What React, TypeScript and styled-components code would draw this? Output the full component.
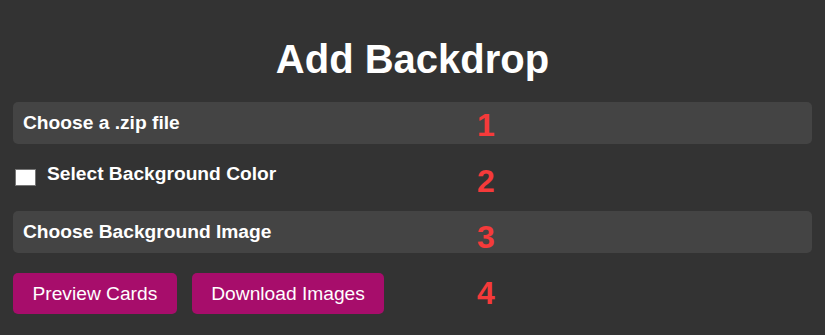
import styled, { createGlobalStyle } from "styled-components";

const GlobalStyle = createGlobalStyle`
  html, body {
    margin: 0;
    padding: 0;
    background-color: #333333;
    font-family: "Liberation Sans", Arial, sans-serif;
  }
`;

const steps = [
  { id: 1, dy: 2 },
  { id: 2, dy: 3 },
  { id: 3, dy: 5 },
  { id: 4, dy: -1 },
];

const App = () => {
  return (
    <>
      <GlobalStyle />
      <Page>
        <Title>Add Backdrop</Title>
        <Form>
          <FieldRow>
            <FieldLabel>Choose a .zip file</FieldLabel>
            <Marker $dy={steps[0].dy}>{steps[0].id}</Marker>
          </FieldRow>
          <PlainRow>
            <Swatch />
            <FieldLabel $raise>Select Background Color</FieldLabel>
            <Marker $dy={steps[1].dy}>{steps[1].id}</Marker>
          </PlainRow>
          <FieldRow>
            <FieldLabel>Choose Background Image</FieldLabel>
            <Marker $dy={steps[2].dy}>{steps[2].id}</Marker>
          </FieldRow>
          <ButtonRow>
            <ActionButton type="button">Preview Cards</ActionButton>
            <ActionButton type="button">Download Images</ActionButton>
            <Marker $dy={steps[3].dy}>{steps[3].id}</Marker>
          </ButtonRow>
        </Form>
      </Page>
    </>
  );
};

export default App;

const Page = styled.div`
  width: 825px;
  height: 335px;
  box-sizing: border-box;
  padding: 37px 13px 0;
  background-color: #333333;
  color: #ffffff;
  overflow: hidden;
`;

const Title = styled.h1`
  margin: 0;
  text-align: center;
  font-size: 40px;
  font-weight: 700;
  line-height: 45px;
`;

const Form = styled.div`
  display: flex;
  flex-direction: column;
  gap: 12px;
  margin-top: 20px;
`;

const FieldRow = styled.div`
  position: relative;
  display: flex;
  align-items: center;
  height: 42px;
  padding: 0 10px;
  border-radius: 5px;
  background-color: #444444;
`;

const PlainRow = styled.div`
  position: relative;
  display: flex;
  align-items: center;
  gap: 11px;
  height: 43px;
  padding: 0 2px;
`;

const FieldLabel = styled.span<{ $raise?: boolean }>`
  font-size: 19.2px;
  font-weight: 700;
  color: #ffffff;
  margin-bottom: ${(p) => (p.$raise ? "7px" : "0")};
`;

const Swatch = styled.span`
  display: block;
  width: 19px;
  height: 15px;
  border: 1px solid #767676;
  background-color: #ffffff;
`;

const ButtonRow = styled.div`
  position: relative;
  display: flex;
  gap: 15px;
  margin-top: 8px;
`;

const ActionButton = styled.button`
  height: 41px;
  padding: 0 19.5px;
  border: none;
  border-radius: 5px;
  background-color: #a70d6b;
  color: #ffffff;
  font-family: "Liberation Sans", Arial, sans-serif;
  font-size: 19.2px;
  cursor: pointer;
`;

const Marker = styled.span<{ $dy: number }>`
  position: absolute;
  left: 463px;
  top: calc(50% + ${(p) => p.$dy}px);
  transform: translateY(-50%);
  width: 20px;
  text-align: center;
  font-size: 32px;
  font-weight: 700;
  line-height: 32px;
  color: #f53a3a;
`;
